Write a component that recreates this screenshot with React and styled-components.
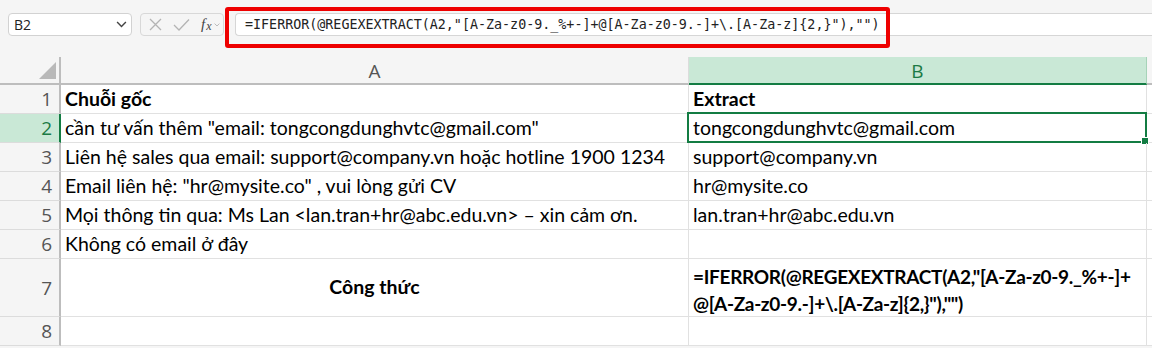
import React from "react";
import styled, { createGlobalStyle } from "styled-components";

const Global = createGlobalStyle`
  html, body { margin: 0; padding: 0; background: #ffffff; }
  body { font-family: Lato, "Open Sans", sans-serif; overflow: hidden; }
`;

const Page = styled.div`
  width: 1152px;
  height: 348px;
  display: flex;
  flex-direction: column;
  background: #f5f5f5;
`;

const Toolbar = styled.div`
  position: relative;
  height: 57px;
  display: flex;
  align-items: flex-start;
  padding-top: 13px;
  box-sizing: border-box;
  background: #f5f5f5;
`;

const NameBox = styled.div`
  margin-left: 8px;
  width: 124px;
  height: 23px;
  box-sizing: border-box;
  background: #fff;
  border: 1px solid #d2d2d2;
  border-radius: 4px;
  display: flex;
  align-items: center;
  justify-content: space-between;
  padding: 0 4px 0 5px;
  font-family: "Segoe UI", "Open Sans", sans-serif;
  font-size: 14px;
  color: #222;
`;

const FnBox = styled.div`
  margin-left: 8px;
  width: 84px;
  height: 23px;
  box-sizing: border-box;
  border: 1px solid #d8d8d8;
  border-radius: 4px;
  display: flex;
  align-items: center;
  padding-left: 7px;
  gap: 10px;
`;

const Fx = styled.span`
  font-family: "Liberation Serif", serif;
  font-style: italic;
  font-size: 15px;
  color: #444;
  display: flex;
  align-items: center;
  gap: 2px;
  margin-left: 1px;
`;

const FxSub = styled.span`
  font-size: 12px;
  margin-left: -1px;
  margin-top: 4px;
`;

const FormulaInput = styled.div`
  margin-left: 11px;
  flex: 1;
  height: 23px;
  box-sizing: border-box;
  background: #fff;
  border: 1px solid #d6d6d6;
  border-right: none;
  border-radius: 4px 0 0 4px;
  display: flex;
  align-items: center;
  padding-left: 9px;
  font-family: "DejaVu Sans Mono", "Liberation Mono", monospace;
  font-size: 13.35px;
  color: #222;
  white-space: pre;
`;

const Highlight = styled.div`
  position: absolute;
  left: 225px;
  top: 7px;
  width: 665px;
  height: 41px;
  box-sizing: border-box;
  border: 4px solid #ee0000;
  border-radius: 3px;
  pointer-events: none;
`;

const Sheet = styled.div`
  display: grid;
  grid-template-columns: 61px 628px 458px 1fr;
  grid-template-rows: 28px repeat(6, 29px) 58px 29px;
  background: #fff;
`;

const Corner = styled.div`
  position: relative;
  background: #f5f5f5;
  border-right: 2px solid #bdbdbd;
  border-bottom: 2px solid #bdbdbd;
  box-sizing: border-box;
`;

const CornerTriangle = styled.div`
  position: absolute;
  right: 3px;
  bottom: 4px;
  width: 0;
  height: 0;
  border-left: 17px solid transparent;
  border-bottom: 17px solid #b9b9b9;
`;

const ColHead = styled.div`
  box-sizing: border-box;
  background: ${(p) => (p.$active ? "#c9e8d6" : "#f5f5f5")};
  color: ${(p) => (p.$active ? "#1b7a45" : "#555")};
  border-bottom: 2px solid ${(p) => (p.$active ? "#137c43" : "#bdbdbd")};
  border-right: 1px solid ${(p) => (p.$active ? "#a6d3b8" : "#dcdcdc")};
  display: flex;
  align-items: center;
  justify-content: center;
  font-family: "Segoe UI", "Open Sans", sans-serif;
  font-size: 19px;
  padding-top: 1px;
`;

const Filler = styled.div`
  background: ${(p) => (p.$head ? "#f5f5f5" : "#fff")};
  border-bottom: ${(p) => (p.$head ? "2px solid #bdbdbd" : "1px solid #e1e1e1")};
  box-sizing: border-box;
`;

const RowHead = styled.div`
  box-sizing: border-box;
  background: ${(p) => (p.$active ? "#c9e8d6" : "#f5f5f5")};
  color: ${(p) => (p.$active ? "#1b7a45" : "#555")};
  border-right: 2px solid ${(p) => (p.$active ? "#137c43" : "#bdbdbd")};
  border-bottom: 1px solid #dcdcdc;
  display: flex;
  align-items: center;
  justify-content: flex-end;
  padding-right: 7px;
  font-family: "Segoe UI", "Open Sans", sans-serif;
  font-size: 19px;
`;

const Cell = styled.div`
  position: relative;
  box-sizing: border-box;
  border-right: 1px solid #e1e1e1;
  border-bottom: 1px solid #e1e1e1;
  display: flex;
  flex-direction: column;
  justify-content: ${(p) => (p.$center ? "center" : "flex-end")};
  align-items: ${(p) => (p.$hcenter ? "center" : "flex-start")};
  padding: ${(p) => (p.$wrap ? "4px 4px 0 4px" : "0 4px 3px 4px")};
  font-family: Lato, "Open Sans", sans-serif;
  font-size: ${(p) => (p.$wrap ? "19px" : "19.5px")};
  letter-spacing: ${(p) => (p.$wrap ? "-0.3px" : "normal")};
  font-weight: ${(p) => (p.$bold ? 700 : 400)};
  color: #000;
  white-space: nowrap;
  line-height: ${(p) => (p.$wrap ? "27px" : "normal")};
`;

const Selection = styled.div`
  position: absolute;
  left: -2px;
  top: -2px;
  right: -1px;
  bottom: -1px;
  border: 2px solid #137c43;
  pointer-events: none;
`;

const Handle = styled.div`
  position: absolute;
  right: -4px;
  bottom: -4px;
  width: 6px;
  height: 6px;
  background: #137c43;
  border: 1px solid #fff;
`;

const Chevron = ({ size = 10, color = "#333" }) => (
  <svg width={size} height={size * 0.6} viewBox="0 0 10 6">
    <path d="M1 1 L5 5 L9 1" fill="none" stroke={color} strokeWidth="1.3" />
  </svg>
);

const rows = [
  { a: "Chuỗi gốc", b: "Extract", bold: true },
  { a: 'cần tư vấn thêm "email: tongcongdunghvtc@gmail.com"', b: "tongcongdunghvtc@gmail.com", active: true },
  { a: "Liên hệ sales qua email: support@company.vn hoặc hotline 1900 1234", b: "support@company.vn" },
  { a: 'Email liên hệ: "hr@mysite.co" , vui lòng gửi CV', b: "hr@mysite.co" },
  { a: "Mọi thông tin qua: Ms Lan <lan.tran+hr@abc.edu.vn> – xin cảm ơn.", b: "lan.tran+hr@abc.edu.vn" },
  { a: "Không có email ở đây", b: "" },
];

const formula = '=IFERROR(@REGEXEXTRACT(A2,"[A-Za-z0-9._%+-]+@[A-Za-z0-9.-]+\\.[A-Za-z]{2,}"),"")';

export default function App() {
  return (
    <Page>
      <Global />
      <Toolbar>
        <NameBox>
          <span>B2</span>
          <Chevron size={11} color="#444" />
        </NameBox>
        <FnBox>
          <svg width="15" height="15" viewBox="0 0 15 15">
            <path d="M2 2 L13 13 M13 2 L2 13" stroke="#b4b4b4" strokeWidth="1.3" fill="none" />
          </svg>
          <svg width="17" height="14" viewBox="0 0 17 14">
            <path d="M1 7 L6 12 L16 1.5" stroke="#b4b4b4" strokeWidth="1.3" fill="none" />
          </svg>
          <Fx>
            f<FxSub>x</FxSub>
            <Chevron size={6} color="#aaa" />
          </Fx>
        </FnBox>
        <FormulaInput>{formula}</FormulaInput>
        <Highlight />
      </Toolbar>
      <Sheet>
        <Corner>
          <CornerTriangle />
        </Corner>
        <ColHead>A</ColHead>
        <ColHead $active>B</ColHead>
        <Filler $head />
        {rows.map((r, i) => (
          <React.Fragment key={i}>
            <RowHead $active={r.active}>{i + 1}</RowHead>
            <Cell $bold={r.bold}>{r.a}</Cell>
            <Cell $bold={r.bold}>
              {r.b}
              {r.active && (
                <Selection>
                  <Handle />
                </Selection>
              )}
            </Cell>
            <Filler />
          </React.Fragment>
        ))}
        <RowHead>7</RowHead>
        <Cell $bold $center $hcenter>Công thức</Cell>
        <Cell $bold $center $wrap>
          <span>{'=IFERROR(@REGEXEXTRACT(A2,"[A-Za-z0-9._%+-]+'}</span>
          <span>{'@[A-Za-z0-9.-]+\\.[A-Za-z]{2,}"),"")'}</span>
        </Cell>
        <Filler />
        <RowHead>8</RowHead>
        <Cell />
        <Cell />
        <Filler />
      </Sheet>
    </Page>
  );
}
